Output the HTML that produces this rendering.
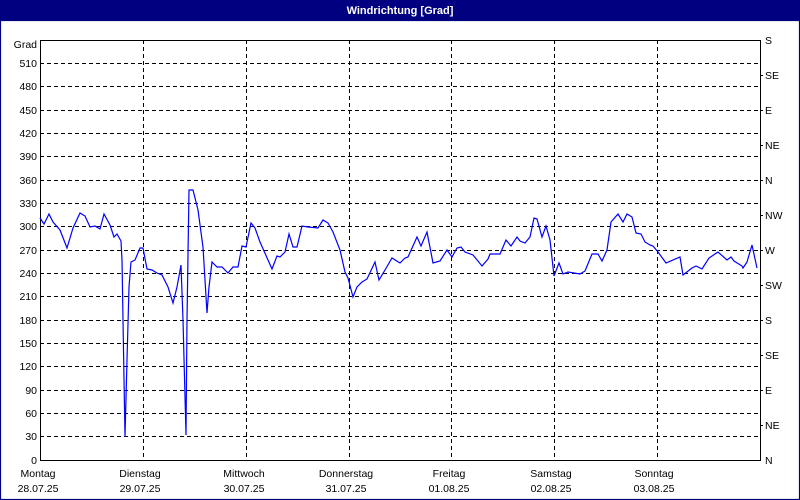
<!DOCTYPE html>
<html><head><meta charset="utf-8"><style>
html,body{margin:0;padding:0;background:#fff;}
svg{display:block;}
text{font-family:"Liberation Sans","DejaVu Sans",sans-serif;font-size:10.5px;fill:#000;}
</style></head><body>
<svg width="800" height="500" viewBox="0 0 800 500" xmlns="http://www.w3.org/2000/svg">
<rect x="0" y="0" width="800" height="500" fill="#fff"/>
<rect x="0" y="0" width="800" height="21" fill="#000080"/>
<rect x="0.5" y="20.5" width="799" height="479" fill="none" stroke="#000080" stroke-width="1.2"/>
<text x="400" y="14" text-anchor="middle" style="fill:#fff;font-weight:bold;font-size:11px">Windrichtung [Grad]</text>
<g stroke="#000" stroke-width="1" stroke-dasharray="4,3" fill="none">
<path d="M40 63.5H760M40 86.5H760M40 110.5H760M40 133.5H760M40 156.5H760M40 180.5H760M40 203.5H760M40 226.5H760M40 250.5H760M40 273.5H760M40 296.5H760M40 320.5H760M40 343.5H760M40 366.5H760M40 390.5H760M40 413.5H760M40 436.5H760"/>
<path d="M143.5 40V460M246.5 40V460M349.5 40V460M451.5 40V460M554.5 40V460M657.5 40V460"/>
</g>
<rect x="40.5" y="40.5" width="720" height="420" fill="none" stroke="#000" stroke-width="1"/>
<g stroke="#000"><path d="M760 75.5h3M760 110.5h3M760 145.5h3M760 180.5h3M760 215.5h3M760 250.5h3M760 285.5h3M760 320.5h3M760 355.5h3M760 390.5h3M760 425.5h3"/></g>
<polyline fill="none" stroke="#0000ff" stroke-width="1.2" points="40,218 44,224 49,214 53,222 60,230 67,248 73,228 80,213 85,216 90,227 95,226 100,229 104,214 110,225 114,237 117,234 121,241 122,260 123,320 125,437 127,360 129,287 131,262 135,260 140,248 143,248 147,269 152,270 157,273 162,275 168,287 173,303 177,287 181,265 183,320 186,435 187,320 189,190 193,190 198,210 203,247 207,313 209,287 212,262 217,267 222,267 228,273 233,267 238,267 242,246 246,247 251,223 255,228 260,242 272,269 277,256 280,257 285,252 289,234 293,247 297,247 302,226 308,227 318,228 323,220 328,223 333,232 340,250 345,272 348,278 353,297 357,287 362,282 367,279 375,262 379,280 385,270 392,258 400,263 405,258 408,257 417,237 421,246 427,232 433,263 440,261 447,250 452,257 457,248 461,247 465,252 473,255 482,266 488,259 490,254 500,254 506,240 511,246 517,237 520,241 525,243 530,237 534,218 537,219 542,237 546,226 550,240 554,276 559,263 563,274 568,272 580,274 585,271 592,254 598,254 602,261 607,250 611,222 618,214 623,222 627,214 632,217 636,233 641,234 645,242 650,245 653,246 658,252 666,263 680,257 683,275 692,268 696,266 702,269 709,258 718,252 727,260 731,257 734,261 742,266 743,268 747,262 752,245 757,268"/>
<g text-anchor="end">
<text x="37" y="48">Grad</text>
<text x="37" y="67">510</text><text x="37" y="90">480</text><text x="37" y="114">450</text><text x="37" y="137">420</text><text x="37" y="160">390</text><text x="37" y="184">360</text><text x="37" y="207">330</text><text x="37" y="230">300</text><text x="37" y="254">270</text><text x="37" y="277">240</text><text x="37" y="300">210</text><text x="37" y="324">180</text><text x="37" y="347">150</text><text x="37" y="370">120</text><text x="37" y="394">90</text><text x="37" y="417">60</text><text x="37" y="440">30</text><text x="37" y="464">0</text>
</g>
<g>
<text x="765" y="44">S</text><text x="765" y="79">SE</text><text x="765" y="114">E</text><text x="765" y="149">NE</text><text x="765" y="184">N</text><text x="765" y="219">NW</text><text x="765" y="254">W</text><text x="765" y="289">SW</text><text x="765" y="324">S</text><text x="765" y="359">SE</text><text x="765" y="394">E</text><text x="765" y="429">NE</text><text x="765" y="464">N</text>
</g>
<g text-anchor="middle">
<text x="38" y="477">Montag</text><text x="38" y="492">28.07.25</text>
<text x="140" y="477">Dienstag</text><text x="140" y="492">29.07.25</text>
<text x="244" y="477">Mittwoch</text><text x="244" y="492">30.07.25</text>
<text x="346" y="477">Donnerstag</text><text x="346" y="492">31.07.25</text>
<text x="449" y="477">Freitag</text><text x="449" y="492">01.08.25</text>
<text x="551" y="477">Samstag</text><text x="551" y="492">02.08.25</text>
<text x="654" y="477">Sonntag</text><text x="654" y="492">03.08.25</text>
</g>
</svg>
</body></html>
